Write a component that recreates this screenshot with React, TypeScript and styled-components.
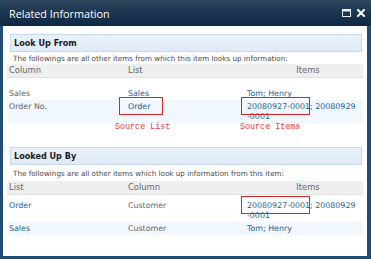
import React from 'react';
import styled, { createGlobalStyle } from 'styled-components';

const GlobalStyle = createGlobalStyle`
  html, body {
    margin: 0;
    padding: 0;
    background: #ffffff;
  }
  body {
    font-family: "DejaVu Sans", Verdana, sans-serif;
  }
`;

const Dialog = styled.div`
  width: 371px;
  height: 259px;
  display: flex;
  flex-direction: column;
  overflow: hidden;
`;

const TitleBar = styled.div`
  height: 26px;
  flex: none;
  display: flex;
  align-items: center;
  padding: 0 6px 0 9px;
  background: linear-gradient(to bottom, #30495f 0%, #1d3652 45%, #0f2843 100%);
  color: #ffffff;
`;

const Title = styled.div`
  flex: 1;
  font-family: "Open Sans", "DejaVu Sans", sans-serif;
  font-size: 10.8px;
  padding-top: 1px;
`;

const TitleButtons = styled.div`
  display: flex;
  gap: 6px;
  align-items: center;
`;

const Body = styled.div`
  flex: 1;
  background: #ffffff;
  border: solid #1f4d74;
  border-width: 0 4px 3px 3px;
  padding: 8px 4px 0 4px;
`;

const SectionHeader = styled.div`
  height: 18px;
  box-sizing: border-box;
  margin: 0 1px 0 3px;
  padding-left: 3px;
  display: flex;
  align-items: center;
  background: linear-gradient(to bottom, #e9f1fb, #dfeaf8);
  border: 1px solid #c4d8ee;
  font-size: 8.1px;
  font-weight: bold;
  color: #1b1b1b;
`;

const Description = styled.div<{ $top: number; $bottom: number }>`
  font-size: 7.2px;
  line-height: 9px;
  color: #474747;
  padding: ${(p) => p.$top}px 0 ${(p) => p.$bottom}px 6px;
`;

const Grid = styled.div`
  display: grid;
  grid-template-columns: 119px 119px 1fr;
  padding: 0 2px;
  font-size: 7.9px;
`;

const HeadRow = styled(Grid)`
  height: 13px;
  line-height: 13px;
  font-size: 8.4px;
  background: #efefef;
  border-bottom: 1px solid #e2e2e2;
  color: #666666;
`;

const HeadItems = styled.div`
  text-align: center;
  padding-left: 8px;
`;

const Row = styled(Grid)<{ $alt?: boolean; $top?: number }>`
  line-height: 10px;
  padding-top: ${(p) => p.$top ?? 2}px;
  padding-bottom: 1px;
  background: ${(p) => (p.$alt ? '#f1f7fd' : 'transparent')};
  color: #666666;
`;

const Cell = styled.div`
  white-space: nowrap;
`;

const LinkText = styled.span`
  color: #26628f;
`;

const Marked = styled.span<{ $padX: number; $padR?: number }>`
  display: inline-block;
  position: relative;
  &::after {
    content: '';
    position: absolute;
    left: -${(p) => p.$padX}px;
    right: -${(p) => p.$padR ?? 0}px;
    top: -5px;
    bottom: -3px;
    border: 1.5px solid #d42424;
  }
`;

const NoteRow = styled(Grid)`
  line-height: 9px;
  height: 9px;
`;

const Note = styled.div<{ $shift: number }>`
  font-family: "Liberation Mono", "DejaVu Sans Mono", monospace;
  font-size: 8.4px;
  color: #e23a3a;
  margin-left: -${(p) => p.$shift}px;
`;

const Spacer = styled.div<{ $h: number }>`
  height: ${(p) => p.$h}px;
`;

const MaxIcon = () => (
  <svg width="9" height="8" viewBox="0 0 9 8">
    <rect x="0.5" y="0.5" width="8" height="7" fill="none" stroke="#e8edf3" strokeWidth="1" />
    <rect x="0.5" y="0.5" width="8" height="2" fill="#e8edf3" />
  </svg>
);

const CloseIcon = () => (
  <svg width="8" height="8" viewBox="0 0 8 8">
    <path d="M1 1 L7 7 M7 1 L1 7" stroke="#ffffff" strokeWidth="2" strokeLinecap="square" />
  </svg>
);

export default function App() {
  return (
    <>
      <GlobalStyle />
      <Dialog>
        <TitleBar>
          <Title>Related Information</Title>
          <TitleButtons>
            <MaxIcon />
            <CloseIcon />
          </TitleButtons>
        </TitleBar>
        <Body>
          <SectionHeader>Look Up From</SectionHeader>
          <Description $top={2} $bottom={1}>
            The followings are all other items from which this item looks up information:
          </Description>
          <HeadRow>
            <Cell>Column</Cell>
            <Cell>List</Cell>
            <HeadItems>Items</HeadItems>
          </HeadRow>
          <Spacer $h={9} />
          <Row>
            <Cell>Sales</Cell>
            <Cell>
              <LinkText>Sales</LinkText>
            </Cell>
            <Cell>
              <LinkText>Tom; Henry</LinkText>
            </Cell>
          </Row>
          <Row $alt>
            <Cell>Order No.</Cell>
            <Cell>
              <Marked $padX={9} $padR={13}>
                <LinkText>Order</LinkText>
              </Marked>
            </Cell>
            <Cell>
              <LinkText>
                <Marked $padX={6}>20080927-0001</Marked>; 20080929
                <br />
                -0001
              </LinkText>
            </Cell>
          </Row>
          <NoteRow>
            <Cell />
            <Note $shift={13}>Source List</Note>
            <Note $shift={7}>Source Items</Note>
          </NoteRow>
          <Spacer $h={15} />
          <SectionHeader>Looked Up By</SectionHeader>
          <Description $top={4} $bottom={3}>
            The followings are all other items which look up information from this item:
          </Description>
          <HeadRow>
            <Cell>List</Cell>
            <Cell>Column</Cell>
            <HeadItems>Items</HeadItems>
          </HeadRow>
          <Row $top={6}>
            <Cell>
              <LinkText>Order</LinkText>
            </Cell>
            <Cell>Customer</Cell>
            <Cell>
              <LinkText>
                <Marked $padX={6}>20080927-0001</Marked>; 20080929
                <br />
                -0001
              </LinkText>
            </Cell>
          </Row>
          <Row $alt>
            <Cell>
              <LinkText>Sales</LinkText>
            </Cell>
            <Cell>Customer</Cell>
            <Cell>
              <LinkText>Tom; Henry</LinkText>
            </Cell>
          </Row>
        </Body>
      </Dialog>
    </>
  );
}
